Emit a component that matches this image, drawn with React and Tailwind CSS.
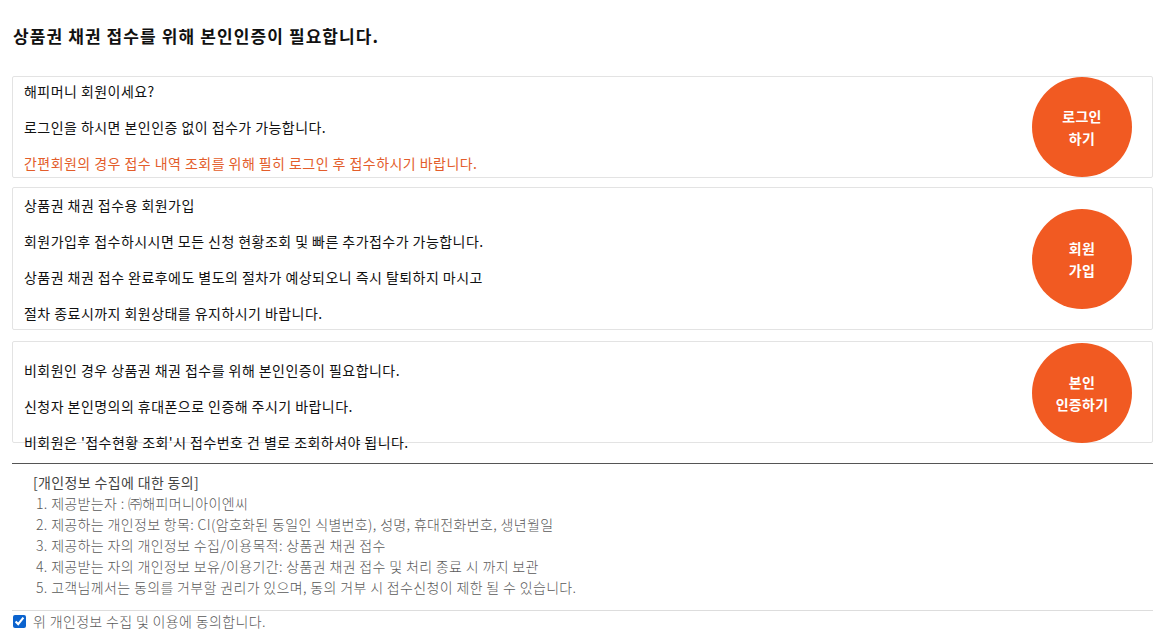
import React, { useState } from 'react';

const font = { fontFamily: '"Noto Sans CJK KR", "Noto Sans", sans-serif' };

const CircleButton = ({ lines }) => (
  <button className="w-[100px] h-[100px] rounded-full bg-[#f15a22] text-white text-[14px] font-bold leading-[22px] tracking-[0.3px] flex flex-col items-center justify-center shrink-0">
    {lines.map((l) => (
      <span key={l}>{l}</span>
    ))}
  </button>
);

const App = () => {
  const [agree, setAgree] = useState(true);

  return (
    <div className="bg-white min-h-[637px] text-[#111]" style={font}>
      <div className="ml-[12px] w-[1141px] pt-[22px]">
        <h2 className="text-[17px] font-bold leading-[28px] tracking-[1.1px] pl-[1px] mb-[26px]">
          상품권 채권 접수를 위해 본인인증이 필요합니다.
        </h2>

        <div className="border border-[#e3e3e3] rounded-[2px] flex items-center justify-between h-[102px] pl-[11px] pr-[20px]">
          <div className="text-[14px] leading-[20px] tracking-[0.45px] space-y-[16px]">
            <p>해피머니 회원이세요?</p>
            <p>로그인을 하시면 본인인증 없이 접수가 가능합니다.</p>
            <p className="text-[#e35d2b]">간편회원의 경우 접수 내역 조회를 위해 필히 로그인 후 접수하시기 바랍니다.</p>
          </div>
          <CircleButton lines={['로그인', '하기']} />
        </div>

        <div className="mt-[9px] border border-[#e3e3e3] rounded-[2px] flex items-center justify-between h-[143px] pl-[11px] pr-[20px]">
          <div className="text-[14px] leading-[20px] tracking-[0.45px] space-y-[16px] pt-[1px]">
            <p>상품권 채권 접수용 회원가입</p>
            <p>회원가입후 접수하시시면 모든 신청 현황조회 및 빠른 추가접수가 가능합니다.</p>
            <p>상품권 채권 접수 완료후에도 별도의 절차가 예상되오니 즉시 탈퇴하지 마시고</p>
            <p>절차 종료시까지 회원상태를 유지하시기 바랍니다.</p>
          </div>
          <CircleButton lines={['회원', '가입']} />
        </div>

        <div className="mt-[11px] border border-[#e3e3e3] rounded-[2px] flex items-start justify-between h-[102px] pl-[11px] pr-[20px]">
          <div className="text-[14px] leading-[20px] tracking-[0.45px] space-y-[16px] pt-[18px]">
            <p>비회원인 경우 상품권 채권 접수를 위해 본인인증이 필요합니다.</p>
            <p>신청자 본인명의의 휴대폰으로 인증해 주시기 바랍니다.</p>
            <p>비회원은 '접수현황 조회'시 접수번호 건 별로 조회하셔야 됩니다.</p>
          </div>
          <div className="pt-[1px]">
            <CircleButton lines={['본인', '인증하기']} />
          </div>
        </div>

        <div className="mt-[20px] border-t border-[#555]">
          <div className="pl-[21px] pt-[8px] pb-[12px] text-[14px] leading-[21px] tracking-[0.35px] text-[#5a5a5a]">
            <p className="text-[#444]">[개인정보 수집에 대한 동의]</p>
            <ol className="pl-[3px] font-light">
              <li>1. 제공받는자 : ㈜해피머니아이엔씨</li>
              <li>2. 제공하는 개인정보 항목: CI(암호화된 동일인 식별번호), 성명, 휴대전화번호, 생년월일</li>
              <li>3. 제공하는 자의 개인정보 수집/이용목적: 상품권 채권 접수</li>
              <li>4. 제공받는 자의 개인정보 보유/이용기간: 상품권 채권 접수 및 처리 종료 시 까지 보관</li>
              <li>5. 고객님께서는 동의를 거부할 권리가 있으며, 동의 거부 시 접수신청이 제한 될 수 있습니다.</li>
            </ol>
          </div>
          <div className="border-t border-[#ddd]">
            <label className="flex items-center gap-[7px] text-[14px] leading-[20px] tracking-[0.35px] font-light text-[#5a5a5a]">
              <input
                type="checkbox"
                checked={agree}
                onChange={(e) => setAgree(e.target.checked)}
                className="w-[13px] h-[13px] m-0 ml-[1px] accent-[#0b63ce]"
              />
              위 개인정보 수집 및 이용에 동의합니다.
            </label>
          </div>
        </div>
      </div>
    </div>
  );
};

export default App;
